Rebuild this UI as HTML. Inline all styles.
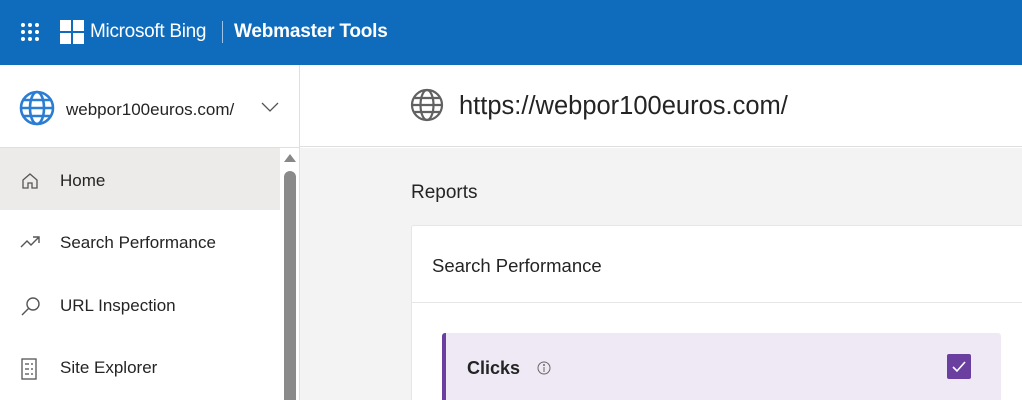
<!DOCTYPE html>
<html style="overflow:hidden;width:1022px;height:400px"><head><style>
*{margin:0;padding:0;box-sizing:border-box}
body{width:1022px;height:400px;overflow:hidden;font-family:"Segoe UI","Liberation Sans",sans-serif;background:#fff;position:relative;color:#242424}
.hdr{position:absolute;left:0;top:0;width:1022px;height:65px;background:#0f6cbd;color:#fff}
.abs{position:absolute}
.side{position:absolute;left:0;top:65px;width:300px;height:335px;border-right:1px solid #e1dfdd;background:#fff;overflow:hidden}
.nav{position:absolute;left:0;width:280px;height:62px;font-size:17px;color:#242424}
.nav span{position:absolute;left:60px;top:23px}
.nav svg{position:absolute;left:20px;top:23px}
</style></head><body>
<div class="hdr">
  <svg class="abs" style="left:20px;top:22px" width="20" height="20" viewBox="0 0 20 20" fill="#fff">
    <circle cx="3" cy="3" r="2"/><circle cx="10" cy="3" r="2"/><circle cx="17" cy="3" r="2"/>
    <circle cx="3" cy="10" r="2"/><circle cx="10" cy="10" r="2"/><circle cx="17" cy="10" r="2"/>
    <circle cx="3" cy="17" r="2"/><circle cx="10" cy="17" r="2"/><circle cx="17" cy="17" r="2"/>
  </svg>
  <svg class="abs" style="left:60px;top:20px" width="24" height="24" viewBox="0 0 24 24" fill="#fff">
    <rect x="0" y="0" width="11" height="11"/><rect x="13" y="0" width="11" height="11"/><rect x="0" y="13" width="11" height="11"/><rect x="13" y="13" width="11" height="11"/>
  </svg>
  <div class="abs" style="left:90px;top:21px;font-size:19px;letter-spacing:-0.3px">Microsoft Bing</div>
  <div class="abs" style="left:222px;top:21px;width:1px;height:22px;background:#9fc3e6"></div>
  <div class="abs" style="left:234px;top:21px;font-size:19px;font-weight:600;letter-spacing:-0.2px">Webmaster Tools</div>
</div>
<div class="side">
  <svg class="abs" style="left:19px;top:25px" width="36" height="36" viewBox="0 0 36 36" fill="none" stroke="#2b7cd3" stroke-width="2.6">
    <circle cx="18" cy="18" r="16"/><ellipse cx="18" cy="18" rx="7" ry="16"/><line x1="2" y1="18" x2="34" y2="18"/><line x1="5" y1="10" x2="31" y2="10"/><line x1="5" y1="26" x2="31" y2="26"/>
  </svg>
  <div class="abs" style="left:66px;top:35px;font-size:17px">webpor100euros.com/</div>
  <svg class="abs" style="left:261px;top:37px" width="18" height="10" viewBox="0 0 18 10" fill="none" stroke="#555" stroke-width="1.3"><polyline points="1,1 9,9 17,1"/></svg>
  <div class="abs" style="left:0;top:82px;width:299px;height:1px;background:#e1dfdd"></div>
  <div class="nav" style="top:83px;background:#edebe9"><svg width="20" height="20" viewBox="0 0 20 20" fill="none" stroke="#555" stroke-width="1.3"><path d="M3 9 L10 3 L17 9 V17 H12 V12 H8 V17 H3 Z"/></svg><span>Home</span></div>
  <div class="nav" style="top:145px"><svg width="22" height="20" viewBox="0 0 22 20" fill="none" stroke="#555" stroke-width="1.4"><polyline points="1,14 7,8 11,12 19,4"/><polyline points="13,4 19,4 19,10"/></svg><span>Search Performance</span></div>
  <div class="nav" style="top:208px"><svg width="22" height="22" viewBox="0 0 22 22" fill="none" stroke="#555" stroke-width="1.4"><circle cx="13" cy="8" r="6"/><line x1="9" y1="12" x2="2" y2="19"/></svg><span>URL Inspection</span></div>
  <div class="nav" style="top:270px"><svg width="18" height="22" viewBox="0 0 18 22" fill="none" stroke="#555" stroke-width="1.3"><rect x="2" y="1" width="14" height="20"/><line x1="5" y1="6" x2="9" y2="6"/><line x1="5" y1="11" x2="9" y2="11"/><line x1="5" y1="16" x2="9" y2="16"/><line x1="11" y1="6" x2="13" y2="6"/><line x1="11" y1="11" x2="13" y2="11"/><line x1="11" y1="16" x2="13" y2="16"/></svg><span>Site Explorer</span></div>
  <svg class="abs" style="left:283px;top:88px" width="14" height="10" viewBox="0 0 14 10"><polygon points="7,1 13,9 1,9" fill="#888"/></svg>
  <div class="abs" style="left:284px;top:106px;width:12px;height:229px;border-radius:6px 6px 0 0;background:#8a8a8a"></div>
</div>
<div class="abs" style="left:300px;top:65px;width:722px;height:82px;background:#fff;border-bottom:1px solid #e1dfdd"></div>
<svg class="abs" style="left:410px;top:88px" width="34" height="34" viewBox="0 0 34 34" fill="none" stroke="#616161" stroke-width="2.2">
  <circle cx="17" cy="17" r="15"/><ellipse cx="17" cy="17" rx="6.5" ry="15"/><line x1="2" y1="17" x2="32" y2="17"/><line x1="4" y1="10" x2="30" y2="10"/><line x1="4" y1="24" x2="30" y2="24"/>
</svg>
<div class="abs" style="left:459px;top:92px;font-size:25.5px;color:#242424">https://webpor100euros.com/</div>
<div class="abs" style="left:300px;top:148px;width:722px;height:252px;background:#f3f3f3"></div>
<div class="abs" style="left:411px;top:182px;font-size:19px">Reports</div>
<div class="abs" style="left:411px;top:225px;width:611px;height:175px;background:#fff;border:1px solid #e6e6e6;border-bottom:none;border-right:none;border-radius:3px 0 0 0"></div>
<div class="abs" style="left:432px;top:255px;font-size:18.5px">Search Performance</div>
<div class="abs" style="left:412px;top:302px;width:610px;height:1px;background:#e6e6e6"></div>
<div class="abs" style="left:442px;top:333px;width:559px;height:67px;background:#efe9f5;border-left:4px solid #6b3fa0;border-radius:3px 3px 0 0"></div>
<div class="abs" style="left:467px;top:358px;font-size:18px;font-weight:700;color:#242424">Clicks</div>
<svg class="abs" style="left:537px;top:361px" width="14" height="14" viewBox="0 0 14 14" fill="none" stroke="#666" stroke-width="1"><circle cx="7" cy="7" r="6"/><line x1="7" y1="6" x2="7" y2="11"/><circle cx="7" cy="4" r="0.5"/></svg>
<div class="abs" style="left:947px;top:354px;width:24px;height:25px;background:#6b3fa0;border-radius:2px"></div>
<svg class="abs" style="left:947px;top:354px" width="24" height="25" viewBox="0 0 24 25" fill="none" stroke="#fff" stroke-width="1.6"><polyline points="6,13 10,17 18,8"/></svg>
</body></html>
